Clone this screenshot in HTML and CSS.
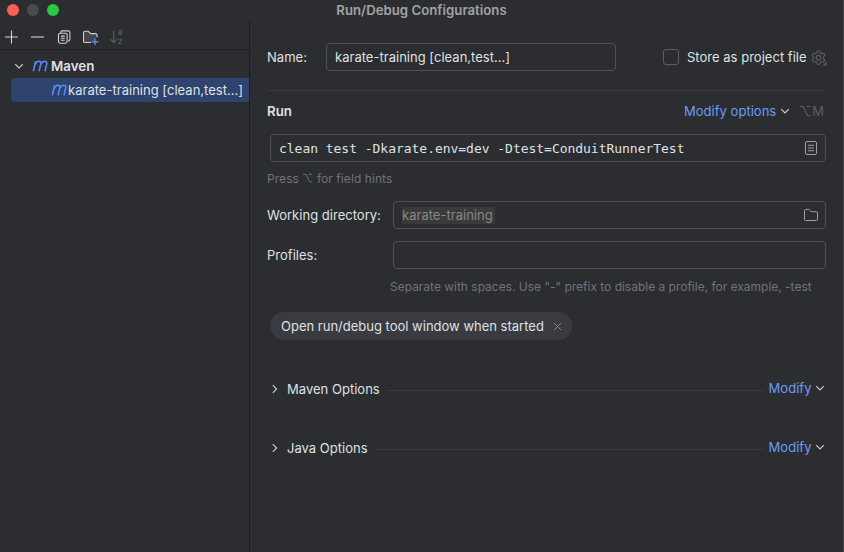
FILE: index.html
```html
<!DOCTYPE html>
<html lang="en">
<head>
<meta charset="utf-8">
<title>Run/Debug Configurations</title>
<link rel="stylesheet" href="styles.css">
</head>
<body>
<div class="window">
  <header class="titlebar">
    <div class="lights"><i class="light red"></i><i class="light gray"></i><i class="light green"></i></div>
    <h1 class="title">Run/Debug Configurations</h1>
  </header>
  <div class="content">
    <aside class="sidebar">
      <div class="toolbar">
        <svg width="16" height="16" viewBox="0 0 16 16"><path d="M7.500 1.500v13M1 8h13"/></svg>
        <svg width="16" height="16" viewBox="0 0 16 16"><path d="M1 8h13"/></svg>
        <svg width="16" height="16" viewBox="0 0 16 16"><rect x="1.500" y="4.200" width="8.600" height="10" rx="1.600"/><path d="M3.700 4V3.400c0-.9.700-1.500 1.600-1.500h5.900c1 0 1.700.7 1.700 1.700v6.600c0 .9-.6 1.700-1.700 1.900M3.800 7.100h4M3.800 9.200h4M3.800 11.300h4"/></svg>
        <svg width="17" height="16" viewBox="0 0 17 16"><path class="folder-fill" d="M8 13.500H2.100A1.600 1.600 0 0 1 .5 11.900V3.900a1.600 1.600 0 0 1 1.600-1.600h3.100l2.400 2.300h4.900a1.600 1.600 0 0 1 1.600 1.600v2"/><path class="blue" d="M12 9.400v6.600M8.700 12.700h6.600"/></svg>
        <svg class="dim" width="16" height="16" viewBox="0 0 16 16"><path d="M3.700 2v11.500M.5 10.300l3.200 3.200 3.200-3.200"/><text class="az" x="8" y="5.800">a</text><text class="az" x="8" y="15">z</text></svg>
      </div>
      <div class="tree">
        <div class="node root">
          <svg width="10" height="10" viewBox="0 0 10 10"><path d="M1.200 3.100L5 6.900l3.800-3.800"/></svg>
          <svg class="maven" width="17" height="14" viewBox="0 0 17 14"><path d="M1.300 12.300L3.700 2.200M2.900 6C3.900 3.500 5.400 2.300 7 2.300c1.700 0 2.200 1 1.800 2.800L7.100 12.300M8.500 6c1.100-2.500 2.700-3.700 4.400-3.700 1.700 0 2.200 1 1.800 2.800L13 12.300"/></svg>
          <b class="t-maven">Maven</b>
        </div>
        <div class="node child">
          <svg class="maven" width="17" height="14" viewBox="0 0 17 14"><path d="M1.300 12.300L3.700 2.200M2.900 6C3.900 3.500 5.400 2.300 7 2.300c1.700 0 2.200 1 1.800 2.800L7.100 12.300M8.500 6c1.100-2.500 2.700-3.700 4.400-3.700 1.700 0 2.200 1 1.800 2.800L13 12.300"/></svg>
          <span>karate-training [clean,test...]</span>
        </div>
      </div>
    </aside>
    <main class="main">
      <div class="row name-row">
        <span class="name-label">Name:</span>
        <div class="field name-field"><span>karate-training [clean,test...]</span></div>
        <i class="checkbox"></i>
        <span>Store as project file</span>
        <svg class="gear" width="16" height="16" viewBox="0 0 16 16"><path d="M6.300 1h2.400l.6 2 1.300.8 2.100-.5 1.200 2.100-1.500 1.500v1.500l1.500 1.500-1.200 2.100-2.100-.5-1.300.8-.6 2H6.300l-.6-2-1.300-.8-2.100.5L1.100 9.900l1.500-1.500V6.900L1.100 5.400l1.200-2.100 2.100.5L5.700 3z"/><circle cx="7.500" cy="7.650" r="2.300"/><path class="corner" d="M15.500 11.500v4h-4z"/></svg>
      </div>
      <div class="row run-row">
        <b>Run</b>
        <span class="link">Modify options</span>
        <svg class="chev" width="10" height="10" viewBox="0 0 10 10"><path d="M1.200 3.100L5 6.900l3.800-3.800"/></svg>
        <span class="shortcut"><svg width="12" height="12" viewBox="0 0 12 12"><path d="M.5 1.500h3.600l4.300 9h3.100M7.300 1.500h4.200"/></svg>M</span>
      </div>
      <div class="field command"><span>clean test -Dkarate.env=dev -Dtest=ConduitRunnerTest</span>
        <svg width="16" height="16" viewBox="0 0 16 16"><rect x="2.500" y="1.500" width="11" height="13" rx="1.500"/><path d="M5 5.300h6M5 8h6M5 10.700h6"/></svg>
      </div>
      <div class="hint press">Press <svg width="11" height="10" viewBox="0 0 12 12"><path d="M.5 1.500h3.600l4.300 9h3.100M7.300 1.500h4.200"/></svg> for field hints</div>
      <div class="row dir-row">
        <span class="label">Working directory:</span>
        <div class="field wide"><span class="macro">karate-training</span>
          <svg width="16" height="16" viewBox="0 0 16 16"><path d="M1.500 3.700c0-.8.500-1.300 1.300-1.300h3l2.500 2.300h4.900c.8 0 1.300.5 1.300 1.300v6.200c0 .8-.5 1.300-1.300 1.300H2.800c-.8 0-1.300-.5-1.300-1.300z"/></svg>
        </div>
      </div>
      <div class="row profiles-row">
        <span class="label">Profiles:</span>
        <div class="field wide"></div>
      </div>
      <div class="hint separate">Separate with spaces. Use "-" prefix to disable a profile, for example, -test</div>
      <div class="chip"><span>Open run/debug tool window when started</span>
        <svg width="9" height="9" viewBox="0 0 9 9"><path d="M1 1l7 7M8 1L1 8"/></svg>
      </div>
      <div class="row section maven-section">
        <svg width="10" height="10" viewBox="0 0 10 10"><path d="M2.800 1.200L6.600 5 2.800 8.800"/></svg>
        <span class="section-title">Maven Options</span><i class="rule"></i><span class="link">Modify</span>
        <svg class="chev" width="10" height="10" viewBox="0 0 10 10"><path d="M1.200 3.100L5 6.900l3.800-3.800"/></svg>
      </div>
      <div class="row section java-section">
        <svg width="10" height="10" viewBox="0 0 10 10"><path d="M2.800 1.200L6.600 5 2.800 8.800"/></svg>
        <span class="section-title">Java Options</span><i class="rule"></i><span class="link">Modify</span>
        <svg class="chev" width="10" height="10" viewBox="0 0 10 10"><path d="M1.200 3.100L5 6.900l3.800-3.800"/></svg>
      </div>
    </main>
  </div>
</div>
</body>
</html>
```
FILE: styles.css
```css
* { box-sizing: border-box; }
body {
  margin: 0;
  background: #2b2d30;
  color: #dfe1e5;
  font: 13px/18px Inter, "Liberation Sans", sans-serif;
  letter-spacing: .02px;
  white-space: nowrap;
}
svg { flex: none; fill: none; stroke: #ced0d6; stroke-width: 1.1; }
b { font-weight: 600; font-size: 13.300px; }
.window { display: flex; flex-direction: column; width: 844px; height: 552px; border-right: 1px solid #47494b; overflow: hidden; }
.titlebar { display: grid; grid-template-columns: 1fr auto 1fr; height: 20px; align-items: center; }
.lights { display: flex; gap: 8px; padding-left: 7px; }
.light { width: 12px; height: 12px; border-radius: 50%; }
.red { background: #ff5f57; }
.gray { background: #4b4b4d; }
.green { background: #28c840; }
.title { margin: 0; font-size: 13.200px; font-weight: 600; color: #a2a3a5; }
.content { display: flex; flex: 1; }
.sidebar { flex: none; width: 250px; border-right: 1px solid #1e1f22; }
.toolbar { display: flex; gap: 10.300px; height: 30px; align-items: center; padding: 4px 0 0 4px; border-bottom: 1px solid #1e1f22; }
.folder-fill { fill: #43454a; }
.blue { stroke: #548af7; stroke-width: 1.400; }
.dim { stroke: #5a5d63; overflow: visible; }
.az { font-size: 7.500px; font-weight: 600; fill: #5a5d63; stroke: none; }
.tree { padding-top: 4px; }
.node { display: flex; align-items: center; height: 24px; }
.root { padding-left: 14px; }
.root .maven { margin: 0 2px 0 8px; }
.maven { stroke: #548af7; stroke-width: 1.600; }
.child { margin-left: 11px; padding-left: 40px; background: #2e436e; border-radius: 4px 0 0 4px; }
.main { flex: 1; min-width: 0; padding: 23px 17px 0; }
.row { display: flex; align-items: center; height: 28px; }
.field { display: flex; align-items: center; justify-content: space-between; height: 28px; border: 1px solid #4e5157; border-radius: 4px; padding: 0 6px 0 8px; }
.field svg { stroke: #9da0a8; stroke-width: 1; }
.name-row { height: 48px; align-items: flex-start; line-height: 28px; border-bottom: 1px solid #393b40; }
.name-label { flex: none; width: 59px; }
.name-field { flex: none; width: 290px; line-height: 18px; padding-bottom: 1px; }
.checkbox { flex: none; width: 16px; height: 16px; margin: 6px 8px 0 47px; border: 1px solid #5a5d63; border-radius: 3px; }
.gear { margin: 7px 0 0 4px; stroke: #5a5d63; }
.corner { fill: #5a5d63; stroke: none; }
.run-row { margin: 6px 0 9px; }
.run-row .link { margin-left: auto; }
.link { color: #6b9bfa; }
.chev { margin-left: 4px; }
.shortcut { display: flex; align-items: center; gap: 1px; margin: 0 2px 0 9px; color: #5a5d63; }
.shortcut svg { stroke: #5a5d63; }
.command { margin-left: 3px; font: 13px/18px "DejaVu Sans Mono", "Liberation Mono", monospace; letter-spacing: -.03px; }
.command span { padding-top: 1px; }
.hint { color: #6f737a; font-size: 12px; }
.hint svg { stroke: #6f737a; }
.press { margin-top: 8px; height: 31px; letter-spacing: .07px; }
.label { width: 126px; }
.wide { flex: 1; }
.macro { background: #3a3a39; color: #858789; line-height: 17px; padding-right: 2px; }
.profiles-row { margin-top: 12px; }
.separate { margin: 9px 0 0 123px; height: 34px; letter-spacing: -.01px; }
.chip { display: flex; align-items: center; gap: 9px; width: 302px; height: 28px; margin-left: 3px; padding-left: 11px; border-radius: 14px; background: #393b40; letter-spacing: 0; }
.chip svg { stroke: #868a91; stroke-width: 1; }
.section > svg:first-child { margin: 0 7px 0 3px; }
.maven-section { margin-top: 35px; }
.java-section { margin-top: 31px; }
.rule { flex: 1; height: 1px; margin: 2px 6px 0 7px; background: #393b40; }
.section .link, .section .chev { position: relative; top: -1px; }
.section .chev { margin: 0 1px 0 3.500px; }
```
